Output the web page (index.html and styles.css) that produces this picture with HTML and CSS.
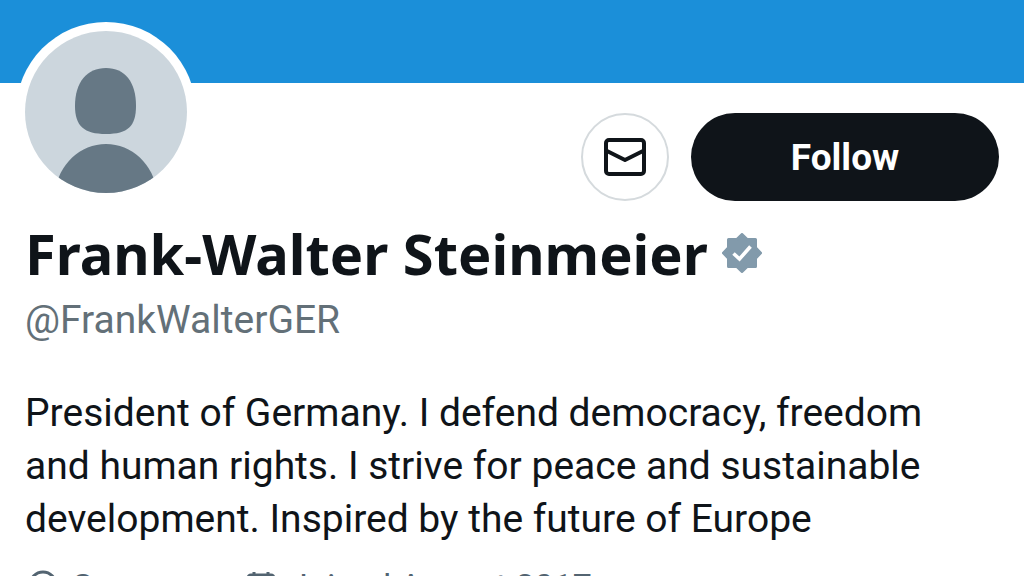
FILE: index.html
```html
<!DOCTYPE html>
<html lang="en">
<head>
<meta charset="utf-8">
<meta name="viewport" content="width=device-width, initial-scale=1">
<title>Frank-Walter Steinmeier</title>
<link rel="stylesheet" href="styles.css">
</head>
<body>
<div class="banner"></div>
<main class="profile">
  <div class="top-row">
    <svg class="avatar" viewBox="0 0 180 180" role="img" aria-label="Profile picture">
      <defs><clipPath id="face"><circle cx="90" cy="90" r="81"/></clipPath></defs>
      <circle cx="90" cy="90" r="90" fill="#fff"/>
      <g clip-path="url(#face)">
        <rect width="180" height="180" fill="#ccd6dd"/>
        <path fill="#667885" d="M90 46C109 46 120 60 120 84C120 104 112 112 90 112C68 112 59 104 59 84C59 60 71 46 90 46Z"/>
        <path fill="#667885" d="M38 180C38 146 62 122 90 122C118 122 142 146 142 180Z"/>
      </g>
    </svg>
    <div class="actions">
      <button class="message" type="button" aria-label="Message">
        <svg viewBox="0 0 42 38" width="42" height="38" fill="none" stroke="#0f1419" stroke-width="4" stroke-linejoin="round"><rect x="2" y="2" width="38" height="34" rx="3"/><path d="M3 13L21 22L39 13"/></svg>
      </button>
      <button class="follow" type="button">Follow</button>
    </div>
  </div>
  <h1 class="name">Frank-Walter Steinmeier
    <svg class="badge" viewBox="0 0 40 40" role="img" aria-label="Verified"><path fill="#829aab" stroke="#829aab" stroke-width="3" stroke-linejoin="round" d="M20 1.500L25.200 6.500H33.500V14.800L38.500 20L33.500 25.200V33.500H25.200L20 38.500L14.800 33.500H6.500V25.200L1.500 20L6.500 14.800V6.500H14.800Z"/><path fill="none" stroke="#fff" stroke-width="3.600" d="M11.500 20.500L17.500 26L28.500 13.500"/></svg>
  </h1>
  <p class="handle">@FrankWalterGER</p>
  <p class="bio">President of Germany. I defend democracy, freedom and human rights. I strive for peace and sustainable development. Inspired by the future of Europe</p>
  <ul class="meta">
    <li><svg viewBox="0 0 36 40" width="36" height="40" fill="none" stroke="#536471" stroke-width="3"><path d="M18 38C10 29 5 23 5 15A13 13 0 0 1 31 15C31 23 26 29 18 38Z"/><circle cx="18" cy="15" r="5"/></svg>Germany</li>
    <li><svg viewBox="0 0 36 40" width="36" height="40" fill="none" stroke="#536471" stroke-width="3"><rect x="5" y="5" width="26" height="29" rx="3"/><path d="M5 7H31M11 2V9M25 2V9M10 17H26M10 25H26"/></svg>Joined August 2017</li>
  </ul>
</main>
</body>
</html>
```
FILE: styles.css
```css
* { box-sizing: border-box; }
body {
  margin: 0;
  background: #fff;
  color: #0f1419;
  font-family: Roboto, "Liberation Sans", sans-serif;
  overflow: hidden;
}
.banner { height: 83px; background: #1b8fd9; }
.profile { padding: 0 25px; }
.top-row { display: flex; justify-content: space-between; height: 142px; }
.avatar { width: 180px; height: 180px; flex: none; margin: -61px 0 0 -9px; }
.actions { display: flex; gap: 22px; padding-top: 30px; }
button { font-family: inherit; height: 88px; padding: 0; }
.message {
  width: 88px;
  display: grid;
  place-items: center;
  border: 2px solid #d5dadd;
  border-radius: 50%;
  background: #fff;
}
.follow {
  width: 308px;
  border: 0;
  border-radius: 44px;
  background: #0f1419;
  color: #fff;
  font-size: 37px;
  font-weight: 700;
}
.name {
  display: flex;
  align-items: center;
  gap: 14px;
  margin: 0;
  font-family: "Noto Sans", sans-serif;
  font-size: 56px;
  font-weight: 700;
  line-height: 56px;
}
.badge { width: 40px; height: 40px; flex: none; }
.handle { margin: 14px 0 0; font-size: 39px; line-height: 50px; color: #637078; }
.bio { margin: 42px 40px 0 0; font-size: 39px; line-height: 53px; }
.meta {
  display: flex;
  gap: 36px;
  margin: 16px 0 0;
  padding: 0;
  list-style: none;
  font-size: 34px;
  line-height: 48px;
  color: #536471;
}
.meta li { display: flex; align-items: center; gap: 10px; }
.meta svg { margin-top: 8px; }
```
